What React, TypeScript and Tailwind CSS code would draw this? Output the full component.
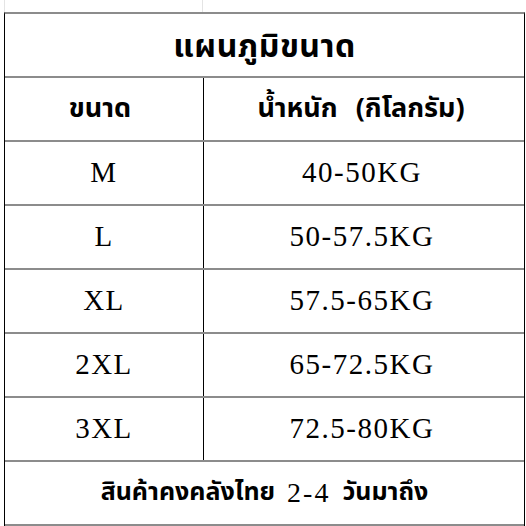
const rows = [
  { size: 'M', weight: '40-50KG' },
  { size: 'L', weight: '50-57.5KG' },
  { size: 'XL', weight: '57.5-65KG' },
  { size: '2XL', weight: '65-72.5KG' },
  { size: '3XL', weight: '72.5-80KG' },
]

const thai = "font-['Noto_Sans_Thai','Tahoma','Noto_Sans',sans-serif]"
const serif = "font-['Liberation_Serif','DejaVu_Serif',serif]"

export default function App() {
  return (
    <div className="w-[526px] h-[526px] bg-white text-black overflow-hidden">
      {/* faint sheet gridlines above the table */}
      <div className="flex h-[12px]">
        <div className="ml-[4px] w-[199px] border-l border-r border-[#e4e4e4]" />
      </div>

      <div className="ml-[4px] w-[521px] border-x border-black border-t-2 border-t-[#8c8c8c]">
        {/* Title */}
        <div className={`h-[64px] flex items-center justify-center pt-[4px] border-b-2 border-[#8c8c8c] ${thai} text-[32px] font-bold tracking-[0.5px]`}>
          แผนภูมิขนาด
        </div>

        {/* Header */}
        <div className={`h-[64px] flex border-b-2 border-[#8c8c8c] ${thai} text-[27px] font-bold`}>
          <div className="w-[199px] border-r border-black flex items-center justify-center pr-[8px]">ขนาด</div>
          <div className="flex-1 flex items-center justify-center gap-[18px] pr-[6px]">
            <span>น้ำหนัก</span>
            <span>(กิโลกรัม)</span>
          </div>
        </div>

        {rows.map((r) => (
          <div key={r.size} className={`h-[64px] flex border-b-2 border-[#8c8c8c] ${serif} text-[29px] tracking-[1.5px]`}>
            <div className="w-[199px] border-r border-black flex items-center justify-center">{r.size}</div>
            <div className="flex-1 flex items-center justify-center pr-[4px]">{r.weight}</div>
          </div>
        ))}

        {/* Footer */}
        <div className={`h-[64px] flex items-center justify-center border-b-2 border-[#8c8c8c] ${thai} text-[25px] font-bold`}>
          สินค้าคงคลังไทย <span className={`${serif} text-[28px] font-normal mx-[12px] tracking-[2px]`}>2-4</span> วันมาถึง
        </div>
      </div>
    </div>
  )
}
